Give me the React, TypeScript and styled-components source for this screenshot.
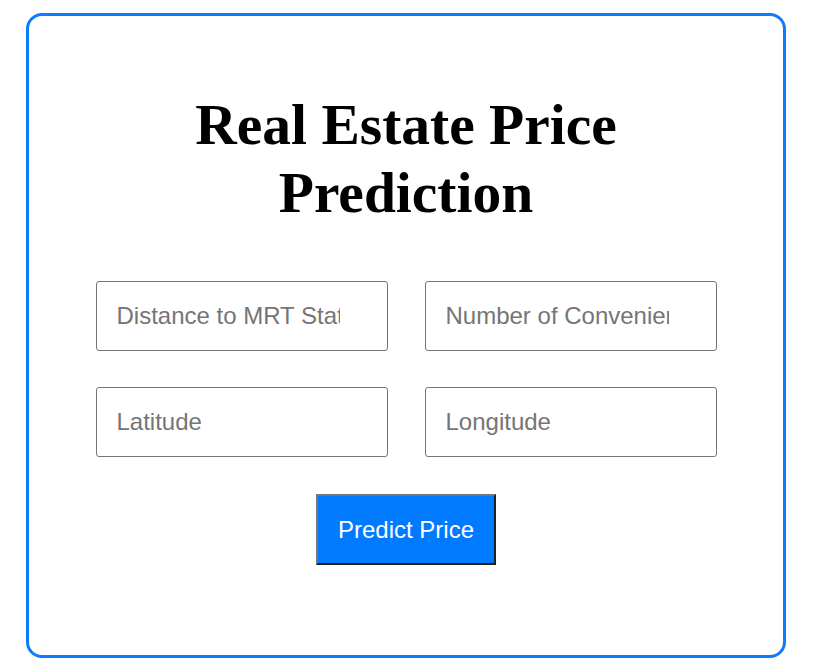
import React from "react";
import styled, { createGlobalStyle } from "styled-components";

const Global = createGlobalStyle`
  html, body { margin: 0; padding: 0; background: #ffffff; }
  body { font-family: "Liberation Sans", Arial, sans-serif; }
  * { box-sizing: border-box; }
`;

const Page = styled.div`
  padding: 13px 26px;
  display: flex;
  justify-content: flex-start;
`;

const Card = styled.div`
  width: 760px;
  height: 645px;
  border: 3px solid #0a7cff;
  border-radius: 16px;
  padding: 75px 0 0;
  display: flex;
  flex-direction: column;
  align-items: center;
`;

const Title = styled.h1`
  margin: 0 0 54px;
  font-family: "Liberation Serif", "Times New Roman", serif;
  font-weight: bold;
  font-size: 57.5px;
  line-height: 68px;
  text-align: center;
  color: #000;
  width: 500px;
`;

const Form = styled.form`
  display: grid;
  grid-template-columns: 292px 292px;
  column-gap: 37px;
  row-gap: 36px;
  justify-items: center;
`;

const Field = styled.input`
  width: 292px;
  height: 70px;
  padding: 20px 47px 20px 20px;
  border: 1px solid #767676;
  border-radius: 3px;
  font-family: "Liberation Sans", Arial, sans-serif;
  font-size: 24px;
  color: #000;
  outline: none;
  &::placeholder { color: #757575; }
`;

const Button = styled.button`
  grid-column: 1 / span 2;
  margin-top: 1px;
  height: 71px;
  padding: 20px;
  background: #007bff;
  color: #fff;
  border-style: solid;
  border-width: 2px;
  border-color: #767676 #202020 #202020 #767676;
  font-family: "Liberation Sans", Arial, sans-serif;
  font-size: 24px;
  cursor: pointer;
`;

export default function App() {
  return (
    <>
      <Global />
      <Page>
        <Card>
          <Title>Real Estate Price Prediction</Title>
          <Form onSubmit={(e) => e.preventDefault()}>
            <Field placeholder="Distance to MRT Station" />
            <Field placeholder="Number of Convenience Stores" />
            <Field placeholder="Latitude" />
            <Field placeholder="Longitude" />
            <Button type="submit">Predict Price</Button>
          </Form>
        </Card>
      </Page>
    </>
  );
}
